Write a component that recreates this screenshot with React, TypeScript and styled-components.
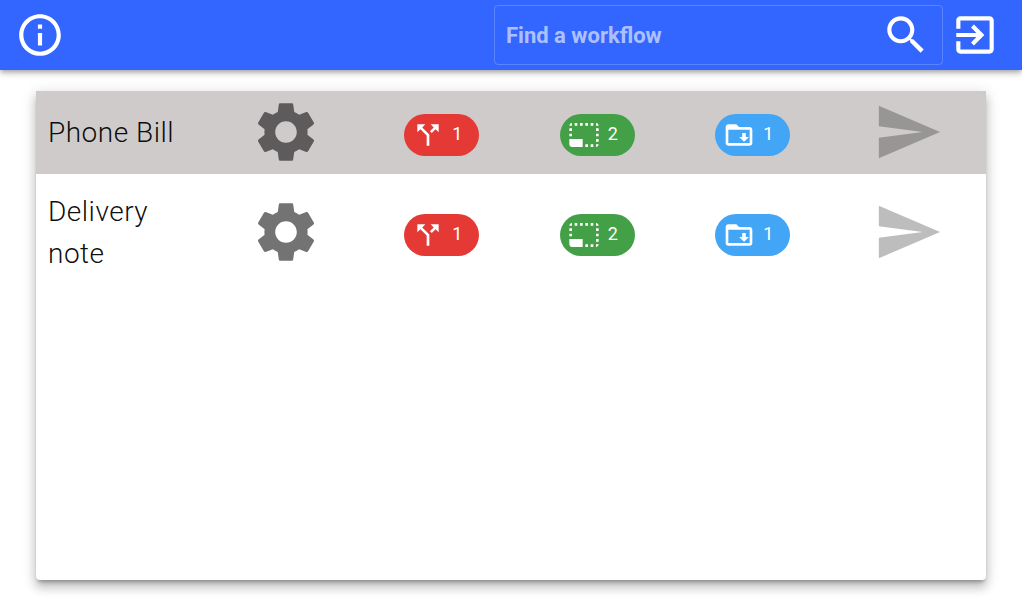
import React from "react";
import styled, { createGlobalStyle } from "styled-components";

const paths = {
  info: "M11 7h2v2h-2zm0 4h2v6h-2zm1-9C6.48 2 2 6.48 2 12s4.48 10 10 10 10-4.48 10-10S17.52 2 12 2zm0 18c-4.41 0-8-3.59-8-8s3.59-8 8-8 8 3.59 8 8-3.59 8-8 8z",
  search:
    "M15.5 14h-.79l-.28-.27C15.41 12.59 16 11.11 16 9.5 16 5.91 13.09 3 9.5 3S3 5.91 3 9.5 5.91 16 9.5 16c1.61 0 3.09-.59 4.23-1.57l.27.28v.79l5 4.99L20.49 19l-4.99-5zm-6 0C7.01 14 5 11.99 5 9.5S7.01 5 9.5 5 14 7.01 14 9.5 11.99 14 9.5 14z",
  exit: "M10.09 15.59L11.5 17l5-5-5-5-1.41 1.41L12.67 11H3v2h9.67l-2.58 2.59zM19 3H5c-1.11 0-2 .9-2 2v4h2V5h14v14H5v-4H3v4c0 1.1.89 2 2 2h14c1.1 0 2-.9 2-2V5c0-1.1-.9-2-2-2z",
  settings:
    "M19.14 12.94c.04-.3.06-.61.06-.94 0-.32-.02-.64-.07-.94l2.03-1.58c.18-.14.23-.41.12-.61l-1.92-3.32c-.12-.22-.37-.29-.59-.22l-2.39.96c-.5-.38-1.03-.7-1.62-.94l-.36-2.54c-.04-.24-.24-.41-.48-.41h-3.84c-.24 0-.43.17-.47.41l-.36 2.54c-.59.24-1.13.57-1.62.94l-2.39-.96c-.22-.08-.47 0-.59.22L2.74 8.87c-.12.21-.08.47.12.61l2.03 1.58c-.05.3-.09.63-.09.94s.02.64.07.94l-2.03 1.58c-.18.14-.23.41-.12.61l1.92 3.32c.12.22.37.29.59.22l2.39-.96c.5.38 1.03.7 1.62.94l.36 2.54c.05.24.24.41.48.41h3.84c.24 0 .44-.17.47-.41l.36-2.54c.59-.24 1.13-.56 1.62-.94l2.39.96c.22.08.47 0 .59-.22l1.92-3.32c.12-.22.07-.47-.12-.61l-2.01-1.58zM12 15.6c-1.98 0-3.6-1.62-3.6-3.6s1.62-3.6 3.6-3.6 3.6 1.62 3.6 3.6-1.62 3.6-3.6 3.6z",
  split:
    "M14 4l2.29 2.29-2.88 2.88 1.42 1.42 2.88-2.88L20 10V4zm-4 0H4v6l2.29-2.29 4.71 4.7V20h2v-8.41l-5.29-5.3z",
  selection:
    "M23 15h-2v2h2v-2zm0-4h-2v2h2v-2zm0 8h-2v2c1 0 2-1 2-2zM15 3h-2v2h2V3zm8 4h-2v2h2V7zm-2-4v2h2c0-1-1-2-2-2zM3 21h8v-6H1v4c0 1.1.9 2 2 2zM3 7H1v2h2V7zm12 12h-2v2h2v-2zm4-16h-2v2h2V3zm0 16h-2v2h2v-2zM3 3C2 3 1 4 1 5h2V3zm0 8H1v2h2v-2zm8-8H9v2h2V3zM7 3H5v2h2V3z",
  folder:
    "M20 6h-8l-2-2H4c-1.1 0-2 .9-2 2v12c0 1.1.9 2 2 2h16c1.1 0 2-.9 2-2V8c0-1.1-.9-2-2-2zm0 12H4V8h16v10zM14.4 10.5h2.7v3h2.4L15.8 17l-3.7-3.5h2.3z",
  send: "M2.01 21L23 12 2.01 3 2 10l15 2-15 2z",
};

interface IconProps {
  d: string;
  size: number;
  className?: string;
}

function Icon({ d, size, className }: IconProps) {
  return (
    <svg className={className} width={size} height={size} viewBox="0 0 24 24" fill="currentColor">
      <path d={d} />
    </svg>
  );
}

const workflows = [
  { id: "phone", name: "Phone Bill", selected: true },
  { id: "delivery", name: "Delivery note", selected: false },
];

const badges = [
  { icon: paths.split, count: 1, color: "#e53935" },
  { icon: paths.selection, count: 2, color: "#43a047" },
  { icon: paths.folder, count: 1, color: "#42a5f5" },
];

export default function App() {
  return (
    <Page>
      <GlobalStyle />
      <Toolbar>
        <ToolbarIcon d={paths.info} size={50} />
        <ToolbarRight>
          <SearchBox>
            <SearchInput placeholder="Find a workflow" />
            <ToolbarIcon d={paths.search} size={50} />
          </SearchBox>
          <ToolbarIcon d={paths.exit} size={50} />
        </ToolbarRight>
      </Toolbar>
      <Main>
        <Card>
          {workflows.map((workflow) => (
            <Row key={workflow.id} $selected={workflow.selected}>
              <Name>{workflow.name}</Name>
              <Cell>
                <GearIcon d={paths.settings} size={72} />
              </Cell>
              {badges.map((badge) => (
                <Cell key={badge.color}>
                  <Badge $color={badge.color}>
                    <Icon d={badge.icon} size={32} />
                    <BadgeCount>{badge.count}</BadgeCount>
                  </Badge>
                </Cell>
              ))}
              <Cell>
                <SendIcon d={paths.send} size={70} />
              </Cell>
            </Row>
          ))}
        </Card>
      </Main>
    </Page>
  );
}

const GlobalStyle = createGlobalStyle`
  body {
    margin: 0;
    background: #fff;
    font-family: Roboto, "Liberation Sans", sans-serif;
  }
`;

const Page = styled.div`
  height: 600px;
  overflow: hidden;
`;

const Toolbar = styled.header`
  height: 70px;
  display: flex;
  align-items: center;
  justify-content: space-between;
  padding: 0 22px 0 15px;
  background: #3366ff;
  color: #fff;
  box-shadow: 0 2px 4px -1px rgba(0, 0, 0, 0.2), 0 4px 5px 0 rgba(0, 0, 0, 0.14),
    0 1px 10px 0 rgba(0, 0, 0, 0.12);
  position: relative;
`;

const ToolbarRight = styled.div`
  display: flex;
  align-items: center;
  gap: 7px;
`;

const ToolbarIcon = styled(Icon)`
  display: block;
  flex: none;
`;

const SearchBox = styled.div`
  width: 449px;
  height: 60px;
  box-sizing: border-box;
  display: flex;
  align-items: center;
  padding: 0 11px;
  border: 1px solid rgba(255, 255, 255, 0.2);
  border-radius: 4px;
`;

const SearchInput = styled.input`
  flex: 1;
  min-width: 0;
  padding: 0;
  border: 0;
  outline: 0;
  background: transparent;
  color: #fff;
  font: 700 22px Roboto, sans-serif;

  &::placeholder {
    color: rgba(255, 255, 255, 0.62);
    opacity: 1;
  }
`;

const Main = styled.main`
  padding: 21px 36px 0;
`;

const Card = styled.section`
  height: 489px;
  background: #fff;
  border-radius: 0 0 4px 4px;
  box-shadow: 0 3px 3px -1px rgba(0, 0, 0, 0.12), 0 5px 5px -3px rgba(0, 0, 0, 0.2),
    0 8px 10px 1px rgba(0, 0, 0, 0.14), 0 3px 14px 2px rgba(0, 0, 0, 0.12);
`;

const Row = styled.div<{ $selected: boolean }>`
  display: grid;
  grid-template-columns: 172.5px repeat(5, 1fr);
  align-items: center;
  height: ${({ $selected }) => ($selected ? "83px" : "117px")};
  background: ${({ $selected }) => ($selected ? "#cecbca" : "transparent")};
`;

const Name = styled.div`
  padding: 0 30px 0 12px;
  font-size: 28px;
  font-weight: 300;
  letter-spacing: 0.5px;
  line-height: 42px;
  color: rgba(0, 0, 0, 0.95);
`;

const Cell = styled.div`
  display: flex;
  justify-content: center;
  align-items: center;
`;

const GearIcon = styled(Icon)`
  margin-top: -1px;
  color: rgba(0, 0, 0, 0.55);
`;

const SendIcon = styled(Icon)`
  margin-top: -1px;
  color: rgba(0, 0, 0, 0.26);
`;

const Badge = styled.div<{ $color: string }>`
  width: 75px;
  height: 42px;
  box-sizing: border-box;
  display: flex;
  align-items: center;
  gap: 8px;
  padding-left: 8px;
  margin-top: 4px;
  border-radius: 21px;
  background: ${({ $color }) => $color};
  color: #fff;
`;

const BadgeCount = styled.span`
  font-size: 18px;
  margin-top: -2px;
`;
